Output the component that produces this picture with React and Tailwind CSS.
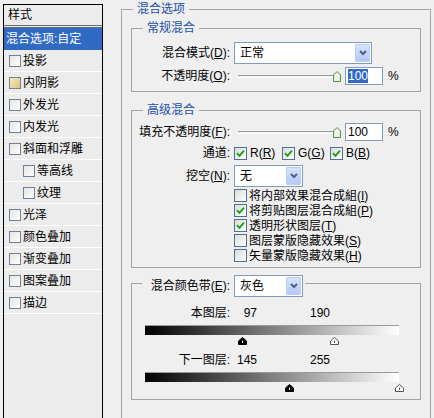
import React from 'react';

const font = "font-['Liberation_Sans','Noto_Sans_CJK_SC',sans-serif]";

const styleItems = [
  { label: '投影' },
  { label: '内阴影', tint: true },
  { label: '外发光' },
  { label: '内发光' },
  { label: '斜面和浮雕' },
  { label: '等高线', indent: true },
  { label: '纹理', indent: true },
  { label: '光泽' },
  { label: '颜色叠加' },
  { label: '渐变叠加' },
  { label: '图案叠加' },
  { label: '描边' },
];

const blendOptions = [
  { text: '将内部效果混合成組', key: 'I', checked: false },
  { text: '将剪贴图层混合成組', key: 'P', checked: true },
  { text: '透明形状图层', key: 'T', checked: true },
  { text: '图层蒙版隐藏效果', key: 'S', checked: false },
  { text: '矢量蒙版隐藏效果', key: 'H', checked: false },
];

const Hot = ({ k }) => (
  <>
    (<span className="underline underline-offset-1">{k}</span>)
  </>
);

// XP style checkbox used on the right side
const XpCheck = ({ checked }) => (
  <span className="flex h-[13px] w-[13px] shrink-0 items-center justify-center border border-[#4d6f94] bg-[linear-gradient(135deg,#dcdcd7,#ffffff)]">
    {checked && (
      <svg width="9" height="9" viewBox="0 0 9 9">
        <path d="M1 4.2 L3.5 6.8 L8 1.6" stroke="#21a121" strokeWidth="2" fill="none" />
      </svg>
    )}
  </span>
);

const XpSelect = ({ value, className }) => (
  <div className={`flex h-[22px] items-stretch border border-[#7f9db9] bg-white ${className}`}>
    <span className="flex flex-1 items-center pl-[5px] text-[12px] leading-none">{value}</span>
    <span className="m-[1px] flex w-[15px] items-center justify-center rounded-[1px] border border-[#b9cdf6] bg-[linear-gradient(#d6e3fd,#b4c9f5)]">
      <svg width="8" height="6" viewBox="0 0 8 6">
        <path d="M1 1 L4 4 L7 1" stroke="#4d6185" strokeWidth="2" fill="none" />
      </svg>
    </span>
  </div>
);

const OpacityRow = ({ label, hot, selected, className }) => (
  <div className={`flex h-[18px] items-center ${className}`}>
    <span className="w-[98px] text-right text-[12px] leading-none">
      {label}
      <Hot k={hot} />:
    </span>
    <span className="ml-[8px] h-[3px] w-[95px] border-t border-b border-[#9d9d9d] border-b-white" />
    <svg width="8" height="11" viewBox="0 0 8 11" className="shrink-0">
      <path d="M0.5 10.5 V4 L4 0.5 L7.5 4 V10.5 Z" fill="#eef3e6" stroke="#4f8d4f" />
    </svg>
    <span className="ml-[4px] flex h-[18px] w-[38px] items-center border border-[#7f9db9] bg-white pl-[2px] text-[12px] leading-none">
      <span className={selected ? 'bg-[#316ac5] py-[1px] text-white' : 'py-[1px]'}>100</span>
    </span>
    <span className="ml-[5px] text-[12px] leading-none">%</span>
  </div>
);

const Thumb = ({ value, dark }) => (
  <svg
    width="9"
    height="8"
    viewBox="0 0 9 8"
    className="absolute top-[1px]"
    style={{ left: (value / 255) * 254 - 4 }}
  >
    <path d="M0.5 7.5 V4 L4.5 0.5 L8.5 4 V7.5 Z" fill={dark ? '#000' : '#fff'} stroke={dark ? '#000' : '#555'} />
    <path d="M4.5 3.5 V6" stroke={dark ? '#fff' : '#555'} strokeWidth="1" />
  </svg>
);

const Band = ({ label, low, high }) => (
  <>
    <div className="flex h-[16px] items-center text-[12px] leading-none">
      <span className="w-[98px] text-right">{label}:</span>
      <span className="w-[27px] text-right">{low}</span>
      <span className="w-[73px] text-right">{high}</span>
    </div>
    <div className="mt-[4px] ml-[13px] h-[10px] w-[254px] border-t border-[#9a9a9a] bg-[linear-gradient(to_right,#000,#fff)]" />
    <div className="relative mt-[1px] ml-[13px] h-[10px] w-[254px]">
      <Thumb value={low} dark />
      <Thumb value={high} />
    </div>
  </>
);

export default function App() {
  return (
    <div className={`flex h-[418px] w-[434px] overflow-hidden bg-[#efefef] text-black ${font}`}>
      {/* styles list */}
      <div className="w-[121px] shrink-0">
        <div className="mt-[4px] ml-[3px] h-[430px] w-[100px] border border-black bg-[#ececec]">
          <div className="flex h-[23px] items-center border-b-[3px] border-double border-[#6b6b6b] pl-[4px] text-[12px] leading-none">
            样式
          </div>
          <div className="flex h-[22px] items-center bg-[#316ac5] pl-[2px] text-[12px] leading-none text-white">
            混合选项:自定
          </div>
          {styleItems.map((item) => (
            <div
              key={item.label}
              className={`flex h-[22px] items-center gap-[2px] border-b border-white text-[12px] leading-none ${
                item.indent ? 'pl-[19px]' : 'pl-[5px]'
              }`}
            >
              <span
                className={`h-[12px] w-[12px] border border-[#6d8299] ${
                  item.tint
                    ? 'bg-[linear-gradient(135deg,#f6ecc4,#dcc47a)]'
                    : 'bg-[linear-gradient(135deg,#e4e4e0,#ffffff)]'
                }`}
              />
              {item.label}
            </div>
          ))}
        </div>
      </div>

      {/* blend options */}
      <fieldset className="h-[440px] w-[310px] shrink-0 border border-[#a3a3a3]">
        <legend className="ml-[11px] px-[4px] text-[12px] leading-[18px] text-[#2150a8]">混合选项</legend>

        {/* general blending */}
        <fieldset className="mx-[9px] mt-[1px] border border-[#a3a3a3]">
          <legend className="ml-[11px] px-[4px] text-[12px] leading-[18px] text-[#2150a8]">常规混合</legend>
          <div className="mt-[5px] flex h-[22px] items-center">
            <span className="w-[98px] text-right text-[12px] leading-none">
              混合模式<Hot k="D" />:
            </span>
            <XpSelect value="正常" className="ml-[4px] w-[138px]" />
          </div>
          <OpacityRow label="不透明度" hot="O" selected className="mt-[3px] mb-[6px]" />
        </fieldset>

        {/* advanced blending */}
        <fieldset className="mx-[9px] mt-[9px] border border-[#a3a3a3]">
          <legend className="ml-[11px] px-[4px] text-[12px] leading-[18px] text-[#2150a8]">高级混合</legend>
          <OpacityRow label="填充不透明度" hot="F" className="mt-[4px]" />
          <div className="mt-[4px] flex h-[16px] items-center text-[12px] leading-none">
            <span className="w-[98px] text-right">通道:</span>
            {['R', 'G', 'B'].map((c) => (
              <span key={c} className="ml-[4px] flex w-[44px] items-center gap-[3px]">
                <XpCheck checked />
                <span>
                  {c}
                  <Hot k={c} />
                </span>
              </span>
            ))}
          </div>
          <div className="mt-[4px] flex h-[22px] items-center">
            <span className="w-[98px] text-right text-[12px] leading-none">
              挖空<Hot k="N" />:
            </span>
            <XpSelect value="无" className="ml-[4px] w-[69px]" />
          </div>
          <div className="mt-[1px] mb-[4px] flex flex-col pl-[102px]">
            {blendOptions.map((o) => (
              <div key={o.key} className="flex h-[15px] items-center gap-[2px] text-[12px] leading-none">
                <XpCheck checked={o.checked} />
                <span>
                  {o.text}
                  <Hot k={o.key} />
                </span>
              </div>
            ))}
          </div>
        </fieldset>

        {/* blend if */}
        <fieldset className="mx-[9px] mt-[1px] border border-[#a3a3a3]">
          <legend className="ml-[10px] flex h-[28px] items-end pr-[2px]">
            <span className="flex h-[22px] w-[88px] items-center justify-end text-[12px] leading-none">
              混合颜色带<Hot k="E" />:
            </span>
            <XpSelect value="灰色" className="ml-[4px] w-[69px]" />
          </legend>
          <div className="mt-[8px] mb-[6px]">
            <Band label="本图层" low={97} high={190} />
            <div className="mt-[6px]" />
            <Band label="下一图层" low={145} high={255} />
          </div>
        </fieldset>
      </fieldset>
    </div>
  );
}
